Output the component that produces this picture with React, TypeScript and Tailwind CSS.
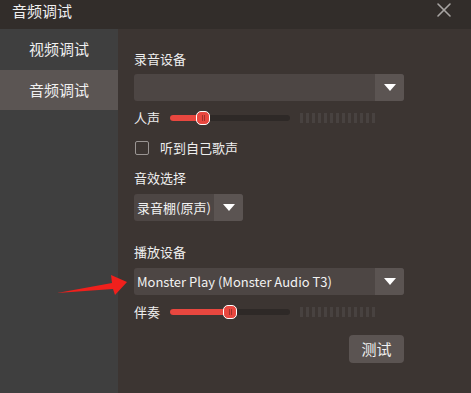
import { X } from "lucide-react"

const font = { fontFamily: '"Noto Sans CJK SC", "Noto Sans", sans-serif' }

function Caret() {
  return (
    <svg width="12" height="8" viewBox="0 0 12 8">
      <path d="M0 0 L12 0 L6 7 Z" fill="#ffffff" />
    </svg>
  )
}

function Select({ text, width }: { text?: string; width: string }) {
  return (
    <div className={`flex h-[27px] ${width} rounded-[3px] overflow-hidden bg-[#4d4644]`}>
      <div className="flex-1 flex items-center pl-[3px] text-[13px] text-[#f2f2f2] whitespace-nowrap">{text}</div>
      <div className="w-[29px] flex items-center justify-center bg-[#5b5452]">
        <Caret />
      </div>
    </div>
  )
}

function Slider({ label, value }: { label: string; value: number }) {
  return (
    <div className="flex items-center h-[16px]">
      <span className="w-[36px] text-[13px] text-[#eeeeee]">{label}</span>
      <div className="relative w-[120px] h-[6px] rounded-full bg-[#2e2927]">
        <div className="absolute left-0 top-0 h-[6px] rounded-full bg-[#e8473f]" style={{ width: value }} />
        <div
          className="absolute top-[-4px] w-[14px] h-[14px] rounded-[5px] border border-white bg-[#e8473f] flex items-center justify-center gap-[1px]"
          style={{ left: value - 7 }}
        >
          <span className="w-px h-[6px] bg-[#a3322c]" />
          <span className="w-px h-[6px] bg-[#a3322c]" />
        </div>
      </div>
      <div className="flex gap-[3px] ml-[10px]">
        {[...Array(13)].map((_, i) => (
          <span key={i} className="w-[3px] h-[10px] bg-[#484240]" />
        ))}
      </div>
    </div>
  )
}

export default function App() {
  return (
    <div className="relative w-[471px] h-[393px] flex flex-col bg-[#3c3532] overflow-hidden" style={font}>
      {/* title bar */}
      <div className="h-[29px] flex items-center justify-between bg-[#322d2a] pl-[12px] pr-[15px]">
        <span className="text-[15px] text-[#f0f0f0] -mt-[7px]">音频调试</span>
        <X className="w-[24px] h-[24px] text-[#a8a5a3] -mt-[9px]" strokeWidth={1.6} />
      </div>

      <div className="flex flex-1">
        {/* sidebar */}
        <div className="w-[118px] bg-[#3f3f3f] flex flex-col">
          <div className="h-[41px] flex items-center justify-center text-[15px] text-[#f0f0f0]">视频调试</div>
          <div className="h-[40px] flex items-center justify-center text-[15px] text-[#f0f0f0] bg-[#5b5553]">音频调试</div>
        </div>

        {/* content */}
        <div className="flex-1 flex flex-col pl-[16px] pt-[21px] text-[#eeeeee] text-[13px]">
          <div className="h-[18px] leading-[18px]">录音设备</div>
          <div className="mt-[6px]">
            <Select width="w-[270px]" />
          </div>
          <div className="mt-[9px]">
            <Slider label="人声" value={33} />
          </div>
          <div className="mt-[15px] flex items-center h-[14px]">
            <span className="w-[14px] h-[14px] border border-[#9a9593] rounded-[2px] ml-px" />
            <span className="ml-[11px]">听到自己歌声</span>
          </div>
          <div className="mt-[14px] h-[18px] leading-[18px]">音效选择</div>
          <div className="mt-[7px]">
            <Select width="w-[109px]" text="录音棚(原声)" />
          </div>
          <div className="mt-[22px] h-[18px] leading-[18px]">播放设备</div>
          <div className="mt-[7px]">
            <Select width="w-[270px]" text="Monster Play (Monster Audio T3)" />
          </div>
          <div className="mt-[9px]">
            <Slider label="伴奏" value={60} />
          </div>
          <div className="mt-[15px] w-[270px] flex justify-end">
            <button className="w-[55px] h-[28px] rounded-[4px] bg-[#5b5452] text-[15px] text-[#f0f0f0]">测试</button>
          </div>
        </div>
      </div>

      {/* annotation arrow */}
      <svg className="absolute left-0 top-0 pointer-events-none" width="471" height="393">
        <polygon points="57,293 112,283 111,275 127,282 115,295 113,289" fill="#f0201c" />
      </svg>
    </div>
  )
}
